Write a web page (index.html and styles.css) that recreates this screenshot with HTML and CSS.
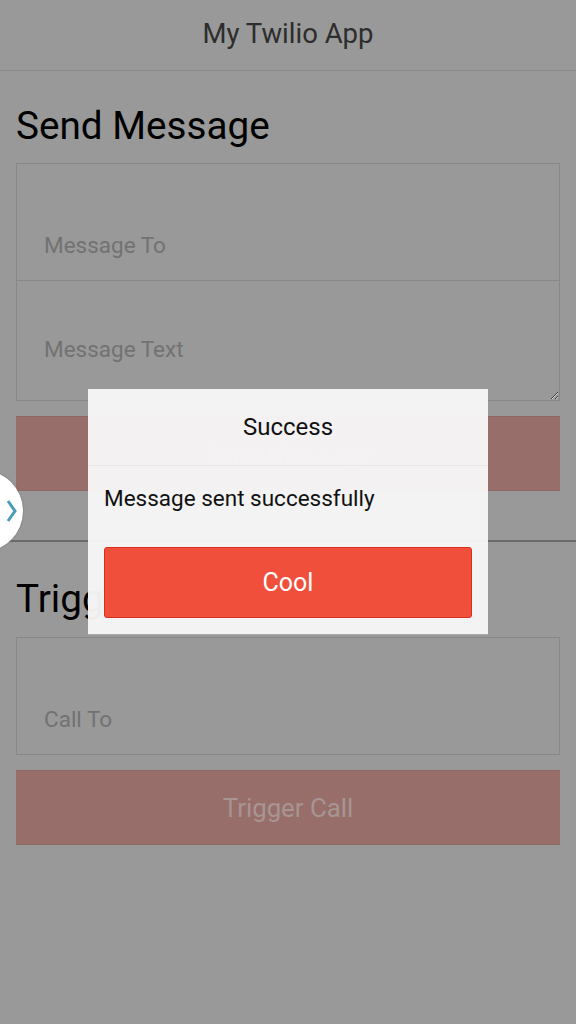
FILE: index.html
```html
<!DOCTYPE html>
<html>
<head>
<meta charset="utf-8">
<link rel="stylesheet" href="styles.css">
</head>
<body>
<div class="app">
  <header class="bar"><span class="bar-title">My Twilio App</span></header>
  <main class="content">
    <section class="card">
      <h1 class="heading">Send Message</h1>
      <div class="fields">
        <input class="field" type="text" placeholder="Message To">
        <textarea class="field area" placeholder="Message Text"></textarea>
      </div>
      <button class="btn">Send Message</button>
    </section>
    <hr class="divider">
    <section class="card">
      <h1 class="heading heading-call">Trigger Call</h1>
      <div class="fields">
        <input class="field" type="text" placeholder="Call To">
      </div>
      <button class="btn">Trigger Call</button>
    </section>
  </main>
  <div class="tab">
    <svg class="chev" width="12" height="24" viewBox="0 0 12 24"><path d="M3 2 L10 12 L3 22" fill="none" stroke="#4a9bb9" stroke-width="3"/></svg>
  </div>
  <div class="dialog">
    <div class="dialog-head">Success</div>
    <div class="dialog-body">
      <p class="dialog-msg">Message sent successfully</p>
      <button class="cool">Cool</button>
    </div>
  </div>
</div>
</body>
</html>
```
FILE: styles.css
```css
html, body {
  margin: 0;
  padding: 0;
}
body {
  background: #999999;
  font-family: Roboto, "Liberation Sans", sans-serif;
  width: 576px;
  height: 1024px;
  overflow: hidden;
}
.app {
  position: relative;
  height: 1024px;
}
.bar {
  height: 70px;
  border-bottom: 1px solid #888888;
  display: flex;
  align-items: center;
  justify-content: center;
}
.bar-title {
  font-size: 27.5px;
  color: #2d2d2d;
  margin-top: -4px;
}
.content {
  padding: 0 16px;
}
.card {
  display: flex;
  flex-direction: column;
}
.heading {
  margin: 0;
  font-weight: 400;
  font-size: 38.7px;
  line-height: 44px;
  color: #000;
  padding-top: 33px;
  padding-bottom: 15px;
}
.heading-call {
  padding-top: 35px;
  padding-bottom: 16px;
}
.fields {
  display: flex;
  flex-direction: column;
}
.field {
  box-sizing: border-box;
  width: 100%;
  height: 118px;
  margin: 0;
  border: 1px solid #888888;
  background: transparent;
  font-family: Roboto, "Liberation Sans", sans-serif;
  font-size: 22.5px;
  padding: 57px 27px 12px;
  outline: none;
  color: #000;
}
.field::placeholder {
  color: #727272;
}
.area {
  height: 121px;
  margin-top: -1px;
  padding: 55px 27px 0;
  resize: vertical;
  display: block;
}
.btn {
  margin-top: 15px;
  height: 75px;
  width: 100%;
  border: none;
  border-top: 1px solid #8f6764;
  border-bottom: 1px solid #8f6764;
  background: #976e69;
  color: #a69593;
  font-family: Roboto, "Liberation Sans", sans-serif;
  font-size: 25.8px;
  padding: 0;
}
.divider {
  margin: 49px -16px 0;
  border: none;
  border-top: 2px solid #6a6a6a;
  height: 0;
}
.tab {
  position: absolute;
  left: -59px;
  top: 470px;
  width: 82px;
  height: 82px;
  border-radius: 50%;
  background: #ffffff;
  box-shadow: 0 0 2px rgba(0,0,0,0.3);
}
.chev {
  position: absolute;
  left: 64px;
  top: 29px;
}
.dialog {
  position: absolute;
  left: 88px;
  top: 389px;
  width: 400px;
  display: flex;
  flex-direction: column;
  border-bottom: 1px solid #a8a8a8;
}
.dialog-head {
  height: 77px;
  box-sizing: border-box;
  background: rgba(247,247,247,0.96);
  border-bottom: 1px solid rgba(225,225,225,0.6);
  display: flex;
  align-items: center;
  justify-content: center;
  font-size: 24px;
  color: #111;
}
.dialog-body {
  background: rgba(246,246,246,0.97);
  padding: 0 16px 16px;
  display: flex;
  flex-direction: column;
}
.dialog-msg {
  margin: 0;
  font-size: 22.5px;
  line-height: 26px;
  color: #111;
  padding: 19px 0 0;
  height: 81px;
  box-sizing: border-box;
}
.cool {
  height: 71px;
  width: 100%;
  border: 1px solid #d7301f;
  border-radius: 3px;
  background: #f04f3c;
  color: #fff;
  font-family: Roboto, "Liberation Sans", sans-serif;
  font-size: 25px;
  padding: 0;
}
```
